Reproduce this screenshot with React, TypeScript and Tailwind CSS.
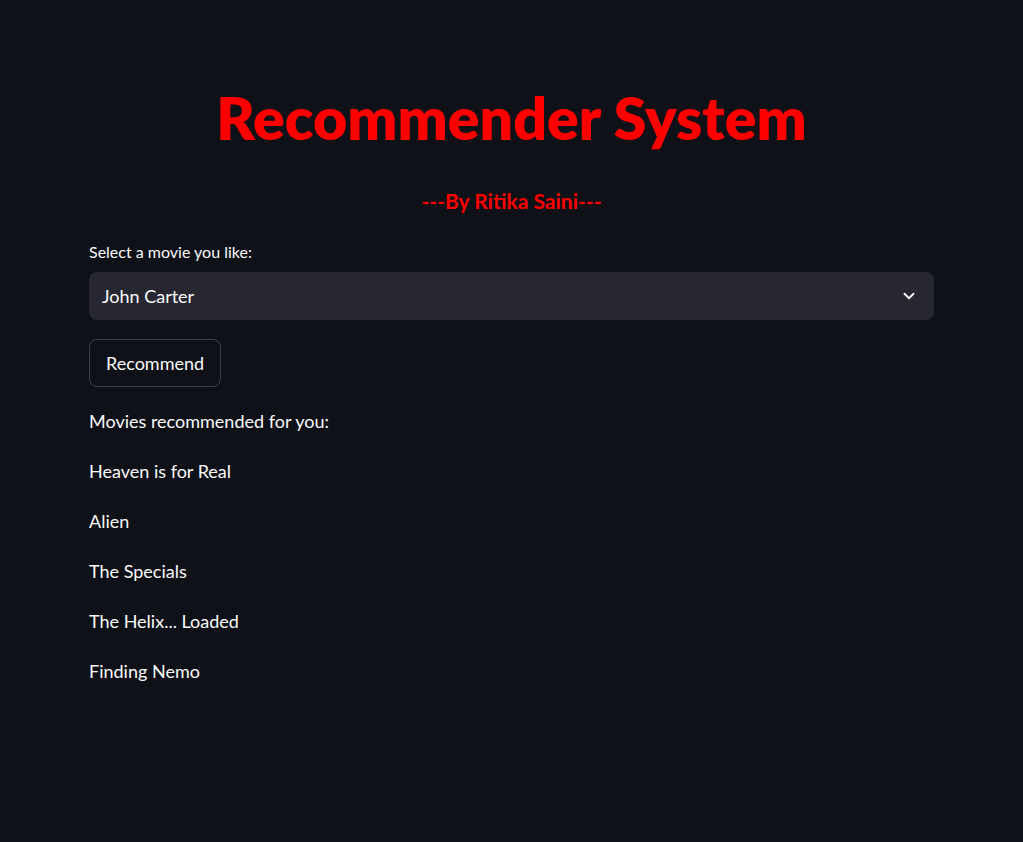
import { ChevronDown } from 'lucide-react';

const recommendations = ['Heaven is for Real', 'Alien', 'The Specials', 'The Helix... Loaded', 'Finding Nemo'];

export default function App() {
  return (
    <div className="min-h-screen bg-[#0e1117] text-[#fafafa]" style={{ fontFamily: 'Lato, "Noto Sans", sans-serif' }}>
      <main className="mx-auto w-[845px] pt-[84px]">
        <h1 className="text-center text-[59px] font-extrabold leading-[68px] text-[#ff0000]">Recommender System</h1>
        <p className="mt-[36px] text-center text-[21px] font-bold leading-[26px] text-[#ff0000]">---By Ritika Saini---</p>

        <label className="mt-[28px] block text-[16px] leading-[20px]">Select a movie you like:</label>
        <div className="mt-[10px] flex h-[48px] items-center justify-between rounded-lg bg-[#262730] pl-[13px] pr-[16px]">
          <span className="text-[18px]">John Carter</span>
          <ChevronDown size={18} strokeWidth={2.5} />
        </div>

        <button className="mt-[19px] flex h-[48px] items-center rounded-lg border border-[#3d3f47] bg-[#0e1117] px-[16px] text-[18px]">
          Recommend
        </button>

        <div className="mt-[21px] flex flex-col gap-[24px] text-[18px] leading-[26px]">
          <p>Movies recommended for you:</p>
          {recommendations.map((movie) => (
            <p key={movie}>{movie}</p>
          ))}
        </div>
      </main>
    </div>
  );
}
